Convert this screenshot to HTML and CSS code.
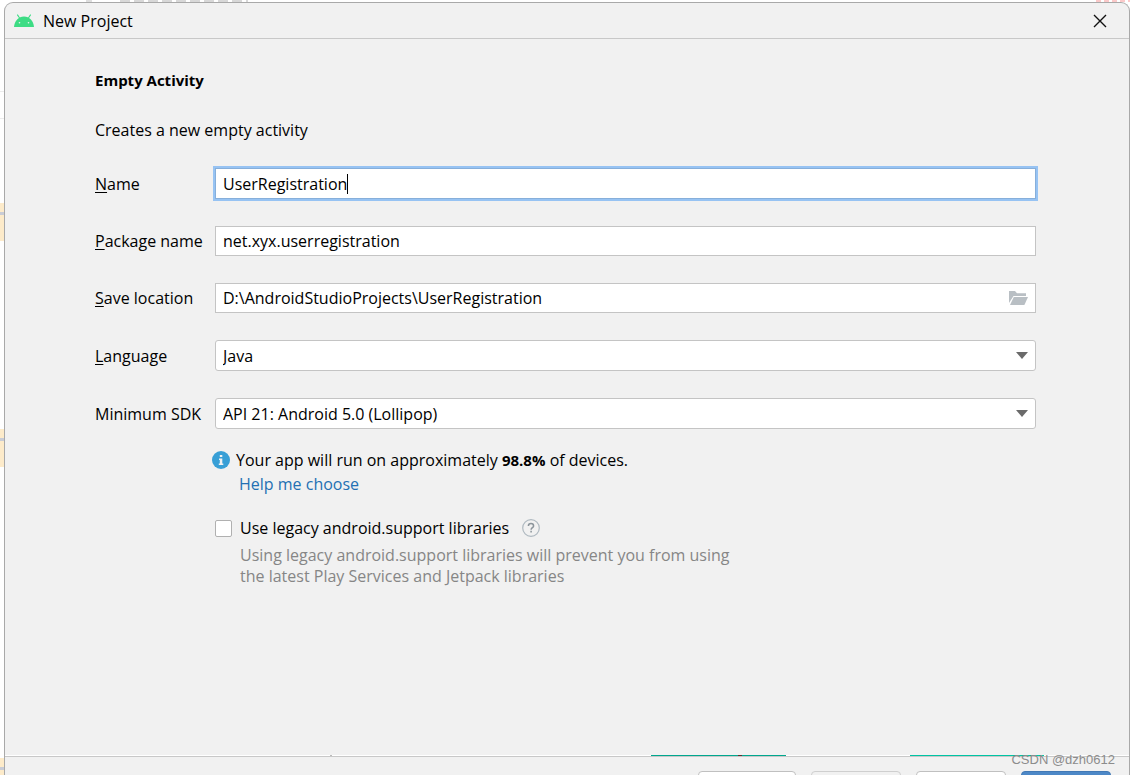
FILE: index.html
```html
<!DOCTYPE html>
<html lang="en">
<head>
<meta charset="utf-8">
<title>New Project</title>
<link rel="stylesheet" href="styles.css">
</head>
<body>
<div class="backdrop" aria-hidden="true"></div>
<div class="dialog">
  <header class="titlebar">
    <svg class="logo" width="20" height="14" viewBox="0 0 20 14" aria-hidden="true">
      <path d="M5.600 4L3.300.6M14.400 4L16.700.6" fill="none" stroke="#3ddc84" stroke-width="1.100"/>
      <path d="M0 13C.5 6.800 4.500 2.600 10 2.600S19.500 6.800 20 13Z" fill="#3ddc84"/>
      <circle cx="5.500" cy="8.800" r=".8" fill="#f1f1f1"/><circle cx="14.500" cy="8.800" r=".8" fill="#f1f1f1"/>
    </svg>
    <span class="title">New Project</span>
    <button class="close" type="button" aria-label="Close">
      <svg width="14" height="14" viewBox="0 0 14 14"><path d="M1 1l12 12M13 1L1 13" stroke="#111" stroke-width="1.400" fill="none"/></svg>
    </button>
  </header>

  <main class="content">
    <h1 class="heading">Empty Activity</h1>
    <p class="intro">Creates a new empty activity</p>

    <form class="form">
      <label class="label" for="name"><u>N</u>ame</label>
      <div class="field focused"><input class="input sized" id="name" type="text" value="UserRegistration"><span class="caret"></span></div>

      <label class="label" for="package"><u>P</u>ackage name</label>
      <div class="field"><input class="input" id="package" type="text" value="net.xyx.userregistration"></div>

      <label class="label" for="location"><u>S</u>ave location</label>
      <div class="field">
        <input class="input" id="location" type="text" value="D:\AndroidStudioProjects\UserRegistration">
        <button class="browse" type="button" aria-label="Browse">
          <svg width="19" height="14" viewBox="0 0 19 14"><path d="M0 0h6l2 2.300h9V5H4.500L0 12Z" fill="#b9bfc4"/><path d="M4.800 6H19l-3.600 8H1Z" fill="#b9bfc4"/></svg>
        </button>
      </div>

      <label class="label" for="language"><u>L</u>anguage</label>
      <div class="field rounded">
        <select class="select" id="language"><option>Java</option></select>
        <svg width="12" height="7" viewBox="0 0 12 7" aria-hidden="true"><path d="M0 0h12L6 7Z" fill="#6a6a6a"/></svg>
      </div>

      <label class="label" for="sdk">Minimum SDK</label>
      <div class="field rounded">
        <select class="select" id="sdk"><option>API 21: Android 5.0 (Lollipop)</option></select>
        <svg width="12" height="7" viewBox="0 0 12 7" aria-hidden="true"><path d="M0 0h12L6 7Z" fill="#6a6a6a"/></svg>
      </div>

      <div class="notes">
        <p class="info">
          <svg width="18" height="18" viewBox="0 0 18 18" aria-hidden="true"><circle cx="9" cy="9" r="9" fill="#389fd6"/><path d="M7.800 4h2.500v2H7.800ZM7 7.500h3.300V12.500h1V14H6.800v-1.500h1V9H7Z" fill="#f1f1f1"/></svg>
          <span>Your app will run on approximately <b>98.8%</b> of devices.</span>
        </p>
        <a class="link" href="#help">Help me choose</a>
        <div class="option">
          <input class="check" type="checkbox" id="legacy">
          <label for="legacy">Use legacy android.support libraries</label>
          <button class="help" type="button" aria-label="Help">
            <svg width="18" height="18" viewBox="0 0 18 18"><circle cx="9" cy="9" r="8.300" fill="none" stroke="#afb9c0" stroke-width="1.200"/><path d="M6.400 7.100C6.400 5.500 7.500 4.600 9 4.600s2.600.9 2.600 2.300c0 1.700-2.500 1.900-2.500 3.900M9.100 11.800v1.700" fill="none" stroke="#8b949b" stroke-width="1.500"/></svg>
          </button>
        </div>
        <p class="hint">Using legacy android.support libraries will prevent you from using<br>the latest Play Services and Jetpack libraries</p>
      </div>
    </form>
  </main>

  <div class="seam" aria-hidden="true"></div>
  <footer class="footer">
    <button class="btn wide" type="button" aria-label="Previous"></button>
    <button class="btn" type="button" aria-label="Next" disabled></button>
    <button class="btn" type="button" aria-label="Cancel"></button>
    <button class="btn primary" type="button" aria-label="Finish"></button>
  </footer>
</div>
<div class="watermark">CSDN @dzh0612</div>
</body>
</html>
```

FILE: styles.css
```css
* { box-sizing: border-box; }

body {
  margin: 0;
  height: 100vh;
  padding: 2px 0 0 4px;
  overflow: hidden;
  background: #fff;
  color: #000;
  font: 16px/22px "Open Sans", "Noto Sans", sans-serif;
}

/* strips of the window behind the dialog */
.backdrop {
  position: absolute;
  inset: 0;
  z-index: -1;
  background:
    linear-gradient(#c9ccd6, #c9ccd6) 0 212px / 4px 3px no-repeat,
    linear-gradient(#c9ccd6, #c9ccd6) 0 438px / 4px 3px no-repeat,
    linear-gradient(#c9ccd6, #c9ccd6) 0 767px / 4px 3px no-repeat,
    linear-gradient(#fdebca, #fdebca) 0 203px / 4px 38px no-repeat,
    linear-gradient(#fdebca, #fdebca) 0 429px / 4px 38px no-repeat,
    linear-gradient(#fdebca, #fdebca) 0 758px / 4px 38px no-repeat,
    linear-gradient(#ececec, #ececec) 0 91px / 4px 1px no-repeat,
    linear-gradient(#ececec, #ececec) 0 118px / 4px 1px no-repeat,
    repeating-linear-gradient(90deg, #d8d8d8 0 10px, #fff 10px 14px) 120px 0 / 128px 2px no-repeat,
    linear-gradient(#dedede, #dedede) 86px 0 / 6px 2px no-repeat,
    repeating-linear-gradient(90deg, #fbc9c9 0 5px, #fff 5px 8px) right 0 top 0 / 34px 2px no-repeat;
}

.dialog {
  display: flex;
  flex-direction: column;
  height: 100%;
  background: #f1f1f1;
  border: 1px solid #a9a9a9;
  border-bottom: 0;
  border-radius: 9px 9px 0 0;
  overflow: hidden;
}

.titlebar {
  display: flex;
  align-items: center;
  gap: 9px;
  height: 36px;
  padding: 0 22px 0 9px;
  border-bottom: 1px solid #c8c8c8;
}

.title { flex: 1; }

button { font: inherit; }

.close, .browse, .help {
  display: flex;
  padding: 0;
  border: 0;
  background: none;
}

.content {
  flex: 1;
  padding: 30px 93px 0 90px;
}

.heading { margin: 0; font-size: 15px; line-height: 22px; }

.intro { margin: 28px 0 27px; }

.form {
  display: grid;
  grid-template-columns: 120px minmax(0, 1fr);
  row-gap: 27px;
}

.label { align-self: center; }

.label u { text-underline-offset: 2px; }

.field {
  display: flex;
  align-items: center;
  height: 30px;
  padding: 0 7px;
  background: #fff;
  border: 1px solid #c4c4c4;
}

.focused {
  height: 31px;
  border-color: #87afda;
  box-shadow: 0 0 0 2px #97c3f3;
}

.rounded { border-radius: 3px; height: 31px; }

.input, .select {
  flex: 1;
  min-width: 0;
  height: 28px;
  padding: 0;
  border: 0;
  outline: 0;
  background: none;
  color: inherit;
  font: inherit;
  appearance: none;
}

.sized { flex: none; field-sizing: content; }

.caret { width: 1px; height: 20px; background: #000; }

.notes {
  grid-column: 2;
  margin-top: -7px;
}

.info {
  display: flex;
  align-items: center;
  gap: 6px;
  margin: 0 0 2px -3px;
}

.info b { font-size: 15px; }

.link {
  display: block;
  margin-left: 24px;
  color: #2470b3;
  text-decoration: none;
}

.option {
  display: flex;
  align-items: center;
  gap: 8px;
  margin-top: 22px;
}

.check {
  appearance: none;
  width: 17px;
  height: 17px;
  margin: 0;
  background: #fff;
  border: 1px solid #b0b0b0;
  border-radius: 2px;
}

.help { margin-left: 5px; }

.hint {
  margin: 6px 0 0 25px;
  line-height: 21px;
  color: #868686;
}

.seam {
  height: 1px;
  background:
    linear-gradient(#5a3030, #5a3030) 733px 0 / 4px 1px no-repeat,
    linear-gradient(#00a78e, #00a78e) 646px 0 / 135px 1px no-repeat,
    linear-gradient(#00c4a4, #00c4a4) 905px 0 / 134px 1px no-repeat,
    linear-gradient(#bbb, #bbb) 325px 0 / 2px 1px no-repeat,
    #fff;
}

.footer {
  display: flex;
  justify-content: flex-end;
  gap: 15px;
  height: 19px;
  padding: 14px 18px 0;
  overflow: hidden;
  border-top: 1px solid #c8c8c8;
}

.btn {
  width: 90px;
  height: 30px;
  background: #fff;
  border: 1px solid #c0c0c0;
  border-radius: 4px;
}

.wide { width: 98px; }

.btn:disabled { background: #f1f1f1; border-color: #cfcfcf; }

.primary { background: #4d88c7; border-color: #4279b5; }

.watermark {
  position: absolute;
  right: 15px;
  bottom: 6px;
  font: 13px/18px "Liberation Sans", sans-serif;
  color: #8c8c8c;
}
```
